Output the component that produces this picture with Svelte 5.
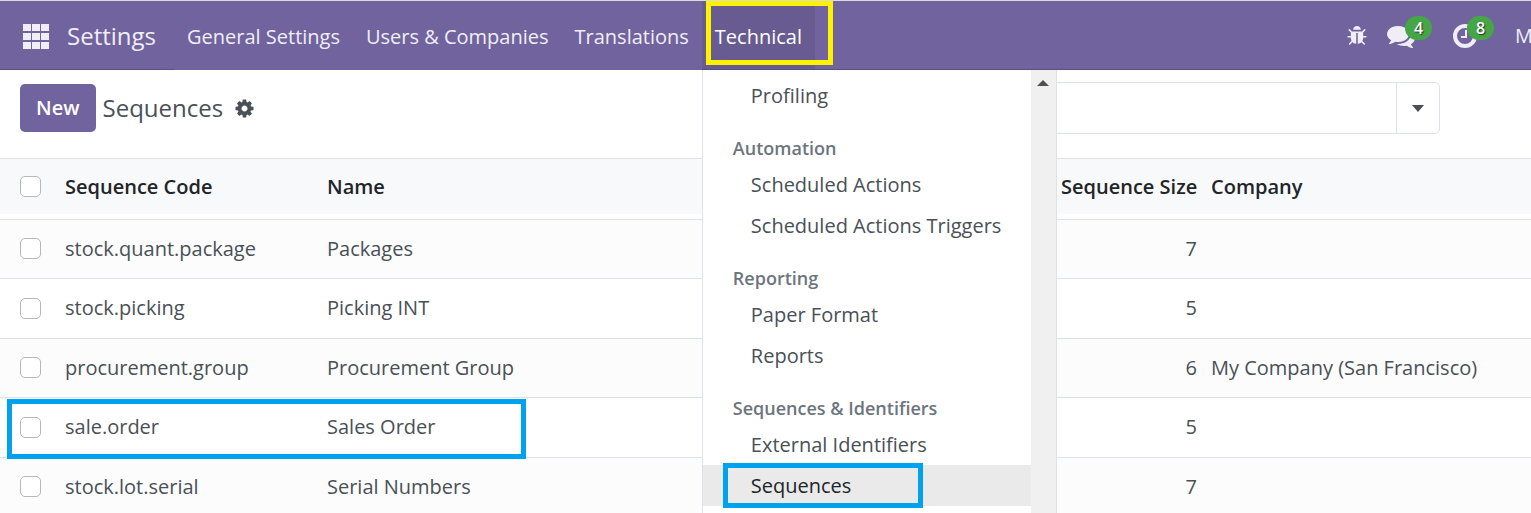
<script lang="ts">
	interface Sequence {
		code: string;
		name: string;
		size: number;
		company: string;
		highlighted?: boolean;
	}

	interface MenuSection {
		title: string;
		items: string[];
	}

	const navItems = ['General Settings', 'Users & Companies', 'Translations'];

	const sections: MenuSection[] = [
		{ title: '', items: ['Profiling'] },
		{ title: 'Automation', items: ['Scheduled Actions', 'Scheduled Actions Triggers'] },
		{ title: 'Reporting', items: ['Paper Format', 'Reports'] },
		{ title: 'Sequences & Identifiers', items: ['External Identifiers', 'Sequences'] }
	];

	const sequences: Sequence[] = [
		{ code: 'stock.quant.package', name: 'Packages', size: 7, company: '' },
		{ code: 'stock.picking', name: 'Picking INT', size: 5, company: '' },
		{ code: 'procurement.group', name: 'Procurement Group', size: 6, company: 'My Company (San Francisco)' },
		{ code: 'sale.order', name: 'Sales Order', size: 5, company: '', highlighted: true },
		{ code: 'stock.lot.serial', name: 'Serial Numbers', size: 7, company: '' }
	];

	let activeItem = $state('Sequences');
	let search = $state('');
</script>

<div class="page">
	<header class="navbar">
		<div class="brand">
			<button class="apps" aria-label="Apps">
				<svg width="26" height="25" viewBox="0 0 26 25" fill="currentColor">
					{#each [0, 9, 18] as y}
						{#each [0, 9, 18] as x}
							<rect {x} {y} width="8" height="7" />
						{/each}
					{/each}
				</svg>
			</button>
			<a class="app-name" href="#settings">Settings</a>
		</div>
		<nav>
			{#each navItems as item}
				<a class="nav-link" href="#nav">{item}</a>
			{/each}
		</nav>
		<div class="dropdown">
			<button class="nav-link open" aria-expanded="true">Technical</button>
			<div class="marker yellow"></div>
			<div class="menu">
				<div class="menu-items">
					{#each sections as section}
						{#if section.title}
							<h6>{section.title}</h6>
						{/if}
						{#each section.items as item}
							<button class="menu-item" class:active={item === activeItem} onclick={() => (activeItem = item)}>
								{item}
								{#if item === 'Sequences'}
									<span class="marker blue"></span>
								{/if}
							</button>
						{/each}
					{/each}
				</div>
				<div class="scrollbar">
					<svg width="12" height="6" viewBox="0 0 12 6"><path d="M0 6 6 0l6 6z" fill="#505050" /></svg>
				</div>
			</div>
		</div>
		<div class="systray">
			<button class="tray" aria-label="Debug">
				<svg width="20" height="22" viewBox="0 0 1664 1792" fill="currentColor">
					<path d="M1632 960q0 26-19 45t-45 19h-224q0 171-67 290l208 209q19 19 19 45t-19 45q-18 19-45 19t-45-19l-198-197q-5 5-15 13t-42 28.5-65 36.5-82 29-97 13v-896h-128v896q-51 0-101.5-13.500t-87-33-66-39-43.500-32.500l-15-14-183 207q-20 21-48 21-24 0-43-16-19-18-20.500-44.500t15.500-46.500l202-227q-58-114-58-274h-224q-26 0-45-19t-19-45 19-45 45-19h224v-294l-173-173q-19-19-19-45t19-45 45-19 45 19l173 173h844l173-173q19-19 45-19t45 19 19 45-19 45l-173 173v294h224q26 0 45 19t19 45zm-480-576h-640q0-133 93.500-226.500t226.500-93.500 226.500 93.500 93.500 226.500z" />
				</svg>
			</button>
			<button class="tray" aria-label="Messages">
				<svg width="28" height="28" viewBox="0 0 1792 1792" fill="currentColor">
					<path d="M1408 768q0 139-94 257t-256.500 186.500-353.500 68.500q-86 0-176-16-124 88-278 128-36 9-86 16h-3q-11 0-20.500-8t-11.500-21q-1-3-1-6.500t.5-6.500 2-6l2.500-5 3.500-5.500 4-5 4.500-5 4-4.500q5-6 23-25t26-29.500 22.500-29 25-38.500 20.500-44q-124-72-195-177t-71-224q0-139 94-257t256.500-186.500 353.500-68.500 353.500 68.500 256.500 186.500 94 257zm384 256q0 120-71 224.500t-195 176.500q10 24 20.500 44t25 38.500 22.500 29 26 29.500 23 25q1 1 4 4.500t4.500 5 4 5 3.500 5.500l2.500 5 2 6 .5 6.500-1 6.500q-3 14-13 22t-22 7q-50-7-86-16-154-40-278-128-90 16-176 16-271 0-472-132 58 4 88 4 161 0 309-45t264-129q125-92 192-212t67-254q0-77-23-152 129 71 204 178t75 230z" />
				</svg>
				<span class="badge">4</span>
			</button>
			<button class="tray activities" aria-label="Activities">
				<svg width="24" height="24" viewBox="0 0 24 24" fill="none" stroke="currentColor">
					<circle cx="12" cy="12" r="10" stroke-width="4" />
					<path d="M13 6v7H8" stroke-width="2" />
				</svg>
				<span class="badge">8</span>
			</button>
			<button class="user">M</button>
		</div>
	</header>

	<div class="control-panel">
		<div class="breadcrumb">
			<button class="new">New</button>
			<h1>Sequences</h1>
			<button class="gear" aria-label="Actions">
				<svg width="21" height="21" viewBox="0 0 1792 1792" fill="currentColor">
					<path d="M1152 896q0-106-75-181t-181-75-181 75-75 181 75 181 181 75 181-75 75-181zm512-109v222q0 12-8 23t-20 13l-185 28q-19 54-39 91 35 50 107 138 10 12 10 25t-9 23q-27 37-99 108t-94 71q-12 0-26-9l-138-108q-44 23-91 38-16 136-29 186-7 28-36 28h-222q-14 0-24.500-8.500t-11.500-21.500l-28-184q-49-16-90-37l-141 107q-10 9-25 9-14 0-25-11-126-114-165-168-7-10-7-23 0-12 8-23 15-21 51-66.500t54-70.500q-27-50-41-99l-183-27q-13-2-21-12.500t-8-23.500v-222q0-12 8-23t19-13l186-28q14-46 39-92-40-57-107-138-10-12-10-24 0-10 9-23 26-36 98.500-107.500t94.500-71.500q13 0 26 10l138 107q44-23 91-38 16-136 29-186 7-28 36-28h222q14 0 24.500 8.500t11.500 21.500l28 184q49 16 90 37l142-107q9-9 24-9 13 0 25 10 129 119 165 170 7 8 7 22 0 12-8 23-15 21-51 66.500t-54 70.500q26 50 41 98l183 28q13 2 21 12.500t8 23.500z" />
				</svg>
			</button>
		</div>
		<div class="search">
			<input type="text" aria-label="Search" bind:value={search} />
			<button aria-label="Toggle search panel">
				<svg width="12" height="7" viewBox="0 0 12 7"><path d="M0 0h12L6 7z" fill="#495057" /></svg>
			</button>
		</div>
	</div>

	<table>
		<thead>
			<tr>
				<th class="select"><input type="checkbox" aria-label="Select all" /></th>
				<th class="code">Sequence Code</th>
				<th>Name</th>
				<th class="size">Sequence Size</th>
				<th class="company">Company</th>
			</tr>
		</thead>
		<tbody>
			<tr class="spacer"><td colspan="5"></td></tr>
			{#each sequences as sequence (sequence.code)}
				<tr>
					<td class="select">
						<input type="checkbox" aria-label="Select {sequence.code}" />
						{#if sequence.highlighted}
							<div class="marker row"></div>
						{/if}
					</td>
					<td>{sequence.code}</td>
					<td>{sequence.name}</td>
					<td class="size">{sequence.size}</td>
					<td>{sequence.company}</td>
				</tr>
			{/each}
		</tbody>
	</table>
</div>

<style>
	:global(body) {
		background: #fff;
	}

	.page {
		height: 100vh;
		overflow: hidden;
		font-family: 'Open Sans', 'Noto Sans', sans-serif;
		font-size: 20px;
		line-height: 28px;
		color: #495057;
	}

	button {
		font: inherit;
		color: inherit;
		background: none;
		border: none;
		padding: 0;
		text-align: left;
		white-space: nowrap;
	}

	a {
		color: inherit;
		text-decoration: none;
		white-space: nowrap;
	}

	svg {
		display: block;
	}

	.navbar {
		display: flex;
		height: 69px;
		border-top: 1px solid #dcdcdc;
		background: #71639e;
		color: #f0eef5;
	}

	.brand,
	.dropdown,
	.systray {
		box-sizing: border-box;
		border-bottom: 1px solid #5a4f7f;
	}

	.brand {
		display: flex;
		align-items: center;
		gap: 18px;
		padding: 2px 18px 0 23px;
		font-size: 24px;
	}

	nav {
		display: flex;
	}

	.nav-link {
		display: flex;
		align-items: center;
		height: 68px;
		padding: 4px 13px 0;
		box-sizing: border-box;
	}

	.dropdown {
		position: relative;
	}

	.open {
		background: #685b91;
		color: #fff;
	}

	.menu {
		position: absolute;
		z-index: 2;
		top: 69px;
		left: 0;
		display: flex;
		width: 353px;
		height: calc(100vh - 70px);
		border: solid #dee2e6;
		border-width: 0 1px;
		background: #fff;
		color: #495057;
	}

	.menu-items {
		flex: 1;
		padding-top: 5px;
		overflow: hidden;
	}

	h6 {
		margin: 0;
		padding: 18px 30px 2px;
		font-size: 18px;
		font-weight: 600;
		color: #6c757d;
	}

	.menu-item {
		position: relative;
		display: block;
		width: 100%;
		height: 41px;
		padding: 0 48px;
	}

	.menu-item.active {
		background: #eaeaea;
		color: #212529;
	}

	.scrollbar {
		display: flex;
		justify-content: center;
		width: 25px;
		padding-top: 10px;
		background: #f0f0f0;
		box-sizing: border-box;
	}

	.marker {
		position: absolute;
		z-index: 1;
		box-sizing: border-box;
		border: 5px solid #00a2ed;
		pointer-events: none;
	}

	.marker.yellow {
		top: 0;
		left: 4px;
		width: 127px;
		height: 64px;
		border-color: #fff200;
	}

	.marker.blue {
		top: -2px;
		left: 20px;
		width: 200px;
		height: 45px;
	}

	.marker.row {
		top: 1px;
		left: 7px;
		width: 519px;
		height: 60px;
	}

	.systray {
		flex: 1;
		min-width: 0;
		display: flex;
		justify-content: flex-end;
		align-items: center;
		gap: 20px;
		padding-top: 2px;
		overflow: hidden;
	}

	.tray {
		position: relative;
		display: flex;
		align-items: center;
		height: 28px;
	}

	.activities {
		margin-left: 18px;
	}

	.badge {
		position: absolute;
		top: -6px;
		right: -17px;
		width: 27px;
		border-radius: 12px;
		background: #46a546;
		color: #fff;
		font-size: 16px;
		font-weight: 600;
		line-height: 24px;
		text-align: center;
		text-shadow: 1px 1px 1px #333;
	}

	.user {
		width: 16px;
		margin-left: 18px;
	}

	.control-panel {
		display: flex;
		align-items: center;
		justify-content: space-between;
		height: 89px;
		padding: 0 91px 12px 20px;
		border-bottom: 1px solid #dee2e6;
		box-sizing: border-box;
	}

	.breadcrumb {
		display: flex;
		align-items: center;
	}

	.new {
		height: 48px;
		padding: 0 16px;
		border-radius: 5px;
		background: #71639e;
		color: #fff;
		font-weight: 600;
	}

	h1 {
		margin: 0 11px 0 7px;
		font-size: 24px;
		font-weight: 400;
	}

	.search {
		display: flex;
		width: 48%;
		height: 52px;
		border: 1px solid #dee2e6;
		border-radius: 5px;
		box-sizing: border-box;
	}

	.search input {
		flex: 1;
		min-width: 0;
		border: none;
		background: none;
		font: inherit;
	}

	.search button {
		display: flex;
		align-items: center;
		justify-content: center;
		width: 43px;
		border-left: 1px solid #dee2e6;
	}

	table {
		width: 100%;
		table-layout: fixed;
		border-collapse: collapse;
	}

	th,
	td {
		height: 59px;
		padding: 0 7px;
		text-align: left;
		box-sizing: border-box;
		white-space: nowrap;
	}

	th {
		height: 55px;
		background: #f8f9fa;
		color: #212529;
		font-weight: 600;
	}

	td {
		border-top: 1px solid #dee2e6;
	}

	tr:nth-child(odd) td {
		height: 60px;
	}

	tr:nth-child(even) td {
		background: #fcfcfc;
	}

	.spacer td {
		height: 5px !important;
		border: none;
	}

	.select {
		position: relative;
		width: 58px;
		padding-left: 20px;
	}

	.select input {
		display: block;
		appearance: none;
		width: 21px;
		height: 21px;
		margin: 0;
		border: 1px solid #b5b7ba;
		border-radius: 5px;
		background: #fff;
	}

	.code {
		width: 262px;
	}

	.size {
		width: 150px;
		text-align: right;
	}

	.company {
		width: 327px;
	}
</style>
